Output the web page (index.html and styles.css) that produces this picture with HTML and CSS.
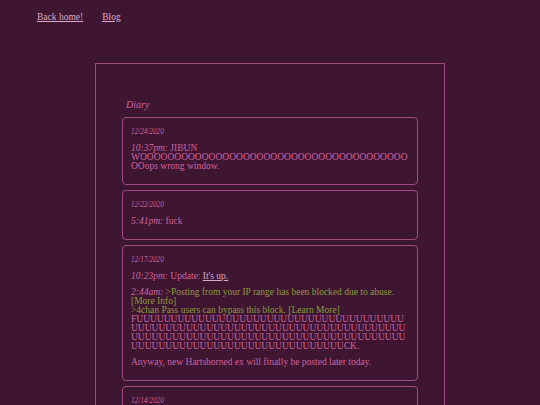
FILE: index.html
```html
<!DOCTYPE html>
<html>
<head>
<meta charset="utf-8">
<link rel="stylesheet" href="styles.css">
</head>
<body>
<nav class="nav">
  <a href="#">Back home!</a>
  <a href="#">Blog</a>
</nav>
<main class="frame">
  <h1 class="title">Diary</h1>
  <section class="card">
    <p class="date">12/24/2020</p>
    <p class="entry"><span class="time">10:37pm:</span> JIBUN WOOOOOOOOOOOOOOOOOOOOOOOOOOOOOOOOOOOOOOOOOops wrong window.</p>
  </section>
  <section class="card">
    <p class="date">12/22/2020</p>
    <p class="entry"><span class="time">5:41pm:</span> fuck</p>
  </section>
  <section class="card">
    <p class="date">12/17/2020</p>
    <p class="entry"><span class="time">10:23pm:</span> Update: <a href="#">It's up.</a></p>
    <p class="entry"><span class="time">2:44am:</span> <span class="green">&gt;Posting from your IP range has been blocked due to abuse. [More Info]<br>&gt;4chan Pass users can bypass this block. [Learn More]</span><br>FUUUUUUUUUUUUUUUUUUUUUUUUUUUUUUUUUUUUUUUUUUUUUUUUUUUUUUUUUUUUUUUUUUUUUUUUUUUUUUUUUUUUUUUUUUUUUUUUUUUUUUUUUUUUUUUUUUUUUUUUUUUUUUUUUUUUUUUUUUUUUUUUUUUUUUCK.</p>
    <p class="entry">Anyway, new Hartshorned ex will finally be posted later today.</p>
  </section>
  <section class="card">
    <p class="date">12/14/2020</p>
  </section>
</main>
</body>
</html>
```
FILE: styles.css
```css
html, body {
  background: #3e1632;
}
body {
  margin: 0;
  font-family: "Liberation Serif", "Times New Roman", serif;
  font-size: 9.5px;
  line-height: 9px;
  color: #d0629f;
}
.nav {
  display: flex;
  gap: 19px;
  padding: 13px 0 0 37px;
  height: 63px;
  box-sizing: border-box;
}
.nav a {
  color: #dca9c9;
}
.frame {
  width: 350px;
  margin: 0 auto;
  border: 1px solid #a04a86;
  border-bottom: none;
  padding: 35px 26px 0 26px;
  box-sizing: border-box;
  min-height: 400px;
}
.title {
  font-size: 10px;
  font-style: italic;
  font-weight: normal;
  margin: 0 0 6px 4px;
  line-height: 12px;
}
.card {
  border: 1px solid #a04a86;
  border-radius: 4px;
  padding: 10px 8px 6px 8px;
  margin-bottom: 5px;
  min-height: 30px;
}
.date {
  font-size: 7.2px;
  font-style: italic;
  margin: 0 0 7px 0;
}
.entry {
  margin: 0 0 7px 0;
  overflow-wrap: anywhere;
}
.time {
  font-style: italic;
}
.entry a {
  color: #dca9c9;
}
.green {
  color: #8c9a3c;
}
```
